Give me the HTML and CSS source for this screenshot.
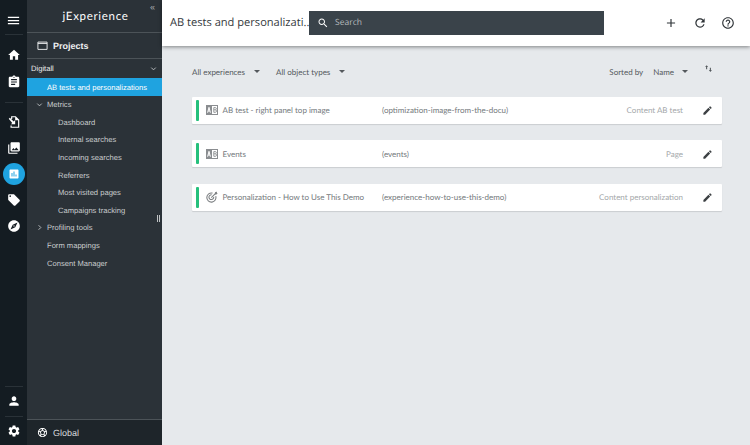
FILE: index.html
```html
<!DOCTYPE html>
<html lang="en">
<head>
<meta charset="utf-8">
<title>jExperience</title>
<link rel="stylesheet" href="styles.css">
</head>
<body>
<div class="app">
  <nav class="rail">
    <div class="rail-top">
      <svg class="ico" viewBox="0 0 24 24"><path d="M3 18h18v-2H3v2zm0-5h18v-2H3v2zm0-7v2h18V6H3z"/></svg>
    </div>
    <div class="rail-group">
      <svg class="ico" viewBox="0 0 24 24"><path d="M10 20v-6h4v6h5v-8h3L12 3 2 12h3v8z"/></svg>
      <svg class="ico" viewBox="0 0 24 24"><path d="M19 3h-4.180C14.400 1.840 13.300 1 12 1s-2.400.84-2.820 2H5c-1.100 0-2 .9-2 2v14c0 1.100.9 2 2 2h14c1.100 0 2-.9 2-2V5c0-1.100-.9-2-2-2zm-7 0c.55 0 1 .45 1 1s-.45 1-1 1-1-.45-1-1 .45-1 1-1zm2 14H7v-2h7v2zm3-4H7v-2h10v2zm0-4H7V7h10v2z"/></svg>
    </div>
    <div class="rail-group rail-tools">
      <svg class="ico" viewBox="0 0 24 24"><path d="M7 2h8l6 6v14H6v-4h2v2h11V9h-5V4H9v3H7z"/><path d="M3 6.500 5 4.500l6.500 6.500 2.500-2.500V16H6.500L9 13.500z"/></svg>
      <svg class="ico" viewBox="0 0 24 24"><path d="M22 16V4c0-1.100-.9-2-2-2H8c-1.100 0-2 .9-2 2v12c0 1.100.9 2 2 2h12c1.100 0 2-.9 2-2zm-11-4 2.030 2.710L16 11l4 5H8l3-4zM2 6v14c0 1.100.9 2 2 2h14v-2H4V6H2z"/></svg>
      <span class="rail-active"><svg class="ico" viewBox="0 0 24 24"><path d="M19 3H5c-1.100 0-2 .9-2 2v14c0 1.100.9 2 2 2h14c1.100 0 2-.9 2-2V5c0-1.100-.9-2-2-2zM9 17H7v-7h2v7zm4 0h-2V7h2v10zm4 0h-2v-4h2v4z"/></svg></span>
      <svg class="ico" viewBox="0 0 24 24"><path d="M21.410 11.580l-9-9C12.050 2.220 11.550 2 11 2H4c-1.100 0-2 .9-2 2v7c0 .55.22 1.050.59 1.420l9 9c.36.36.86.58 1.410.58.55 0 1.050-.22 1.410-.59l7-7c.37-.36.59-.86.59-1.410 0-.55-.23-1.060-.59-1.420zM5.500 7C4.670 7 4 6.330 4 5.500S4.670 4 5.500 4 7 4.670 7 5.500 6.330 7 5.500 7z"/></svg>
      <svg class="ico" viewBox="0 0 24 24"><path d="M12 10.900c-.61 0-1.100.49-1.100 1.100s.49 1.100 1.100 1.100c.61 0 1.100-.49 1.100-1.100s-.49-1.100-1.100-1.100zM12 2C6.480 2 2 6.480 2 12s4.480 10 10 10 10-4.480 10-10S17.520 2 12 2zm2.190 12.190L6 18l3.810-8.190L18 6l-3.810 8.190z"/></svg>
    </div>
    <div class="rail-bottom">
      <div class="rail-cell"><svg class="ico" viewBox="0 0 24 24"><path d="M12 12c2.210 0 4-1.790 4-4s-1.790-4-4-4-4 1.790-4 4 1.790 4 4 4zm0 2c-2.670 0-8 1.340-8 4v2h16v-2c0-2.660-5.330-4-8-4z"/></svg></div>
      <div class="rail-cell"><svg class="ico" viewBox="0 0 24 24"><path d="M19.140 12.940c.04-.3.060-.61.060-.94 0-.32-.02-.64-.07-.94l2.030-1.580c.18-.14.23-.41.12-.61l-1.920-3.320c-.12-.22-.37-.29-.59-.22l-2.390.96c-.5-.38-1.030-.7-1.620-.94l-.36-2.540c-.04-.24-.24-.41-.48-.41h-3.840c-.24 0-.43.17-.47.41l-.36 2.540c-.59.24-1.130.57-1.620.94l-2.390-.96c-.22-.08-.47 0-.59.22L2.740 8.870c-.12.21-.08.47.12.61l2.030 1.580c-.05.3-.09.63-.09.94s.02.64.07.94l-2.030 1.580c-.18.14-.23.41-.12.61l1.920 3.320c.12.22.37.29.59.22l2.390-.96c.5.38 1.030.7 1.620.94l.36 2.540c.05.24.24.41.48.41h3.840c.24 0 .44-.17.47-.41l.36-2.540c.59-.24 1.130-.56 1.620-.94l2.390.96c.22.08.47 0 .59-.22l1.920-3.320c.12-.22.07-.47-.12-.61l-2.010-1.580zM12 15.600c-1.980 0-3.600-1.620-3.600-3.600s1.620-3.600 3.600-3.600 3.600 1.620 3.600 3.600-1.620 3.600-3.600 3.600z"/></svg></div>
    </div>
  </nav>

  <aside class="side">
    <header class="brand">
      <span class="logo">jExperience</span>
      <span class="collapse">«</span>
    </header>
    <div class="projects">
      <svg class="projects-ico" viewBox="0 0 24 24"><path d="M2 4.500h20v16H2z M2 7.500h20" fill="none" stroke="currentColor" stroke-width="2"/></svg>
      <span>Projects</span>
    </div>
    <div class="site"><span>Digitall</span><svg class="chev" viewBox="0 0 10 10"><path d="M2.500 4 5 6.500 7.500 4"/></svg></div>
    <ul class="menu">
      <li class="item active">AB tests and personalizations</li>
      <li class="item"><svg class="chev tw" viewBox="0 0 10 10"><path d="M2.500 4 5 6.500 7.500 4"/></svg>Metrics</li>
      <li class="item sub">Dashboard</li>
      <li class="item sub">Internal searches</li>
      <li class="item sub">Incoming searches</li>
      <li class="item sub">Referrers</li>
      <li class="item sub">Most visited pages</li>
      <li class="item sub">Campaigns tracking</li>
      <li class="item"><svg class="chev tw" viewBox="0 0 10 10"><path d="M4 2.500 6.500 5 4 7.500"/></svg>Profiling tools<span class="grip"></span></li>
      <li class="item">Form mappings</li>
      <li class="item">Consent Manager</li>
    </ul>
    <footer class="global">
      <svg class="globe" viewBox="0 0 24 24"><path d="M12 2C6.480 2 2 6.480 2 12s4.480 10 10 10 10-4.480 10-10S17.520 2 12 2zm1 3.300 1.350-.95c1.820.56 3.370 1.760 4.380 3.340l-.39 1.340-1.350.46L13 6.700V5.300zm-3.350-.95L11 5.300v1.400L7.010 9.490l-1.350-.46-.39-1.340c1.010-1.570 2.560-2.770 4.380-3.340zM7.080 17.110l-1.140.1C4.730 15.810 4 13.990 4 12c0-.12.010-.23.020-.35l1-.73 1.380.48 1.460 4.340-.78 1.370zm7.420 2.480c-.79.26-1.630.41-2.500.41s-1.710-.15-2.500-.41l-.69-1.490.64-1.100h5.110l.64 1.110-.7 1.480zM14.270 15H9.730l-1.350-4.020L12 8.440l3.630 2.540L14.270 15zm3.790 2.210-1.140-.1-.79-1.370 1.460-4.340 1.390-.47 1 .73c.1.110.2.220.2.340 0 1.990-.73 3.810-1.940 5.210z"/></svg>
      <span>Global</span>
    </footer>
  </aside>

  <div class="main">
    <header class="topbar">
      <h1 class="title">AB tests and personalizati...</h1>
      <div class="search">
        <svg class="search-ico" viewBox="0 0 24 24"><path d="M15.500 14h-.79l-.28-.27C15.410 12.590 16 11.110 16 9.500 16 5.910 13.090 3 9.500 3S3 5.910 3 9.500 5.910 16 9.500 16c1.610 0 3.090-.59 4.230-1.570l.27.28v.79l5 4.990L20.490 19l-4.990-5zm-6 0C7.010 14 5 11.990 5 9.500S7.010 5 9.500 5 14 7.010 14 9.500 11.990 14 9.500 14z"/></svg>
        <span>Search</span>
      </div>
      <div class="actions">
        <svg class="act" viewBox="0 0 24 24"><path d="M19 13h-6v6h-2v-6H5v-2h6V5h2v6h6v2z"/></svg>
        <svg class="act" viewBox="0 0 24 24"><path d="M17.650 6.350C16.200 4.900 14.210 4 12 4c-4.420 0-7.990 3.580-7.990 8s3.570 8 7.990 8c3.730 0 6.840-2.550 7.730-6h-2.080c-.82 2.330-3.040 4-5.650 4-3.310 0-6-2.690-6-6s2.690-6 6-6c1.660 0 3.140.69 4.220 1.780L13 11h7V4l-2.350 2.350z"/></svg>
        <svg class="act" viewBox="0 0 24 24"><path d="M11 18h2v-2h-2v2zm1-16C6.480 2 2 6.480 2 12s4.480 10 10 10 10-4.480 10-10S17.520 2 12 2zm0 18c-4.410 0-8-3.590-8-8s3.590-8 8-8 8 3.590 8 8-3.590 8-8 8zm0-14c-2.210 0-4 1.790-4 4h2c0-1.100.9-2 2-2s2 .9 2 2c0 2-3 1.750-3 5h2c0-2.250 3-2.500 3-5 0-2.210-1.790-4-4-4z"/></svg>
      </div>
    </header>

    <section class="content">
      <div class="filters">
        <span class="filter">All experiences<i class="caret"></i></span>
        <span class="filter">All object types<i class="caret"></i></span>
        <span class="sort">
          <span class="sort-label">Sorted by</span>
          <span class="filter">Name<i class="caret"></i></span>
          <svg class="sort-ico" viewBox="0 0 12 12"><path d="M3.500 1.500 5.500 4H4.200v3H2.800V4H1.500zM8.500 10.500 6.500 8h1.300V5h1.400v3h1.300z"/></svg>
        </span>
      </div>

      <article class="card">
        <i class="bar"></i>
        <svg class="type" viewBox="0 0 12 10"><rect x=".5" y=".5" width="11" height="9" fill="#fff" stroke="#8a8d90"/><rect width="6" height="10" fill="#8a8d90"/><path d="M1.600 7.700 3 2.300 4.400 7.700M2.100 6h1.800" fill="none" stroke="#fff"/><path d="M7.800 2.600h1.700c1.100 0 1.100 2.200 0 2.200H7.800M9.500 4.800c1.300 0 1.300 2.500 0 2.500H7.800V2.600" fill="none" stroke="#8a8d90" stroke-width=".9"/></svg>
        <span class="name">AB test - right panel top image</span>
        <span class="key">(optimization-image-from-the-docu)</span>
        <span class="kind">Content AB test</span>
        <svg class="edit" viewBox="0 0 24 24"><path d="M3 17.250V21h3.750L17.810 9.940l-3.750-3.750L3 17.250zM20.710 7.040c.39-.39.39-1.020 0-1.410l-2.340-2.340c-.39-.39-1.020-.39-1.410 0l-1.830 1.830 3.750 3.750 1.830-1.830z"/></svg>
      </article>

      <article class="card">
        <i class="bar"></i>
        <svg class="type" viewBox="0 0 12 10"><rect x=".5" y=".5" width="11" height="9" fill="#fff" stroke="#8a8d90"/><rect width="6" height="10" fill="#8a8d90"/><path d="M1.600 7.700 3 2.300 4.400 7.700M2.100 6h1.800" fill="none" stroke="#fff"/><path d="M7.800 2.600h1.700c1.100 0 1.100 2.200 0 2.200H7.800M9.500 4.800c1.300 0 1.300 2.500 0 2.500H7.800V2.600" fill="none" stroke="#8a8d90" stroke-width=".9"/></svg>
        <span class="name">Events</span>
        <span class="key">(events)</span>
        <span class="kind">Page</span>
        <svg class="edit" viewBox="0 0 24 24"><path d="M3 17.250V21h3.750L17.810 9.940l-3.750-3.750L3 17.250zM20.710 7.040c.39-.39.39-1.020 0-1.410l-2.340-2.340c-.39-.39-1.020-.39-1.410 0l-1.830 1.830 3.750 3.750 1.830-1.830z"/></svg>
      </article>

      <article class="card">
        <i class="bar"></i>
        <svg class="type" viewBox="0 0 12 12"><g fill="none" stroke="#7d8083" stroke-width="1.100"><path d="M9.800 5.200a4.600 4.600 0 1 1-3.300-3.100"/><path d="M7.700 5.800a2.400 2.400 0 1 1-2-2"/><path d="M5.300 6.700 10.300 1.700"/></g><path d="M9.400 1 11 .7l-.2 1.500 1.100.1-1.500 1.300-1.400-.2-.1-1.300z" fill="#7d8083"/></svg>
        <span class="name">Personalization - How to Use This Demo</span>
        <span class="key">(experience-how-to-use-this-demo)</span>
        <span class="kind">Content personalization</span>
        <svg class="edit" viewBox="0 0 24 24"><path d="M3 17.250V21h3.750L17.810 9.940l-3.750-3.750L3 17.250zM20.710 7.040c.39-.39.39-1.020 0-1.410l-2.340-2.340c-.39-.39-1.020-.39-1.410 0l-1.830 1.830 3.750 3.750 1.830-1.830z"/></svg>
      </article>
    </section>
  </div>
</div>
</body>
</html>
```
FILE: styles.css
```css
* { box-sizing: border-box; }
html, body { margin: 0; height: 100%; }
body { font-family: "Liberation Sans", Arial, sans-serif; overflow: hidden; text-rendering: geometricPrecision; }
ul { list-style: none; margin: 0; padding: 0; }

.app { display: flex; width: 750px; height: 445px; }

.rail {
  width: 27px; flex: none; background: #141c22;
  display: flex; flex-direction: column; align-items: center;
}
.ico { width: 14px; height: 14px; fill: #fff; display: block; }
.rail-top { height: 34px; display: flex; align-items: flex-end; padding-bottom: 6px; }
.rail-top .ico { width: 15px; height: 15px; }
.rail-group {
  width: 18px; display: flex; flex-direction: column; align-items: center;
  border-top: 1px solid #2a3238; padding-top: 13px; gap: 12.500px;
}
.rail-tools { margin-top: 13px; padding-top: 12px; gap: 12px; }
.rail-active {
  width: 22px; height: 22px; border-radius: 50%; background: #1fa3e0;
  display: flex; align-items: center; justify-content: center; margin: -4px 0;
}
.rail-active .ico { width: 12px; height: 12px; }
.rail-bottom { margin-top: auto; display: flex; flex-direction: column; align-items: center; }
.rail-cell {
  width: 18px; height: 29.500px; border-top: 1px solid #2a3238;
  display: flex; align-items: center; justify-content: center;
}

.side {
  width: 135px; flex: none; background: #2b3238; color: #d8dadc;
  display: flex; flex-direction: column; position: relative; font-size: 7.600px;
}
.brand {
  height: 33px; display: flex; align-items: center; justify-content: center;
  position: relative; border-bottom: 1px solid #4c5358;
}
.logo { font-family: "Lato", sans-serif; font-size: 11.500px; color: #fff; letter-spacing: .7px; margin-left: 2px; }
.collapse { position: absolute; right: 7px; top: 2px; font-size: 9px; color: #aeb2b5; }
.projects {
  height: 26px; display: flex; align-items: center; gap: 5px; padding-left: 10px;
  font-size: 9px; font-weight: 700; color: #f0f1f2; border-bottom: 1px solid #4c5358;
}
.projects-ico { width: 11px; height: 11px; }
.site {
  height: 19px; display: flex; align-items: center; justify-content: space-between;
  padding: 0 4px; color: #eceded;
}
.chev { width: 9px; height: 9px; fill: none; stroke: #c3c6c8; stroke-width: 1; }
.menu { flex: 1; }
.item {
  height: 17.600px; display: flex; align-items: center; padding-left: 20px;
  position: relative; color: #c9ccce;
}
.item.active { background: #1fa3e0; color: #fff; height: 18px; }
.item.sub { padding-left: 31px; }
.tw { position: absolute; left: 8px; top: 4px; }
.grip {
  position: absolute; right: 2px; top: -4px; width: 3px; height: 7px;
  border-left: 1px solid #bfc2c4; border-right: 1px solid #bfc2c4;
}
.global {
  height: 26px; display: flex; align-items: center; gap: 5px; padding-left: 10px;
  background: #1e252a; border-top: 1px solid #4c5358; font-size: 9px; color: #d8dadc;
}
.globe { width: 11px; height: 11px; fill: #fff; }

.main { flex: 1; min-width: 0; display: flex; flex-direction: column; background: #e6e9ec; }
.topbar {
  height: 46px; background: #fff; display: flex; align-items: center;
  box-shadow: 0 1px 4px rgba(0, 0, 0, .45); position: relative; padding-left: 8px;
}
.title {
  margin: -2px 0 0; width: 139px; font-family: "Open Sans", sans-serif;
  font-size: 11.100px; font-weight: 400; color: #34393d; white-space: nowrap;
}
.search {
  width: 295px; height: 24px; background: #3a434a; color: #b5b9bc;
  display: flex; align-items: center; gap: 6px; padding-left: 8px; font-family: "Open Sans", sans-serif; font-size: 8.500px;
}
.search span { margin-top: -1px; }
.search-ico { width: 12px; height: 12px; fill: #fff; }
.actions { margin-left: auto; display: flex; gap: 14.500px; padding-right: 15px; }
.act { width: 14px; height: 14px; fill: #2f3438; display: block; }

.content { flex: 1; padding: 0 28px 0 30px; font-family: "Lato", sans-serif; }
.filters { height: 50.500px; display: flex; align-items: center; font-size: 8px; color: #54595d; padding-top: 1px; }
.filter { display: inline-flex; align-items: center; }
.caret {
  margin-left: 9px; width: 0; height: 0; border: 3.500px solid transparent; border-top: 3.500px solid #54595d; border-bottom: 0;
}
.filters > .filter:not(:first-child) { margin-left: 16px; }
.sort { margin-left: auto; display: flex; align-items: center; gap: 10px; padding-right: 9.500px; }
.sort .filter .caret { margin-left: 8px; }
.sort-ico { width: 9px; height: 9px; fill: #54595d; margin-left: 5.500px; margin-top: -6px; }

.card {
  height: 27px; background: #fff; border-radius: 1px; display: flex; align-items: center;
  box-shadow: 0 1px 1px rgba(0, 0, 0, .12); margin-bottom: 16.500px; font-size: 8px; color: #74797c;
  padding-left: 4px; position: relative;
}
.bar { width: 3px; height: 21px; background: #26c07c; flex: none; border-radius: 1px; }
.type { width: 12px; height: 12px; flex: none; margin-left: 7px; }
.name { width: 159.500px; margin-left: 4.500px; white-space: nowrap; }
.key { flex: 1; white-space: nowrap; }
.kind { color: #a4a7aa; }
.edit { width: 11px; height: 11px; fill: #3d4144; margin: 1px 9px 0 19px; }
```
